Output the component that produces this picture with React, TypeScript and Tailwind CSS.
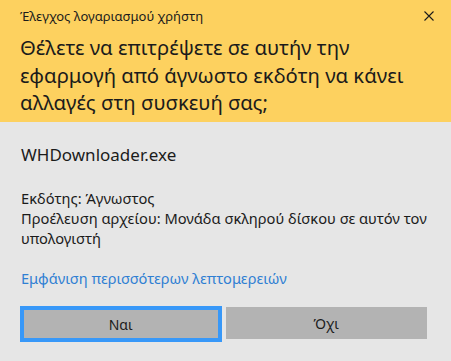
export default function App() {
  return (
    <div className="w-[451px] h-[361px] bg-[#e6e6e6] flex flex-col overflow-hidden font-['Noto_Sans','Open_Sans',sans-serif] text-[#1b1b1b]">
      {/* Header */}
      <div className="h-[122px] bg-[#fdd15f] pl-5 pr-[17px] pt-2">
        <div className="flex items-center justify-between h-4">
          <span className="text-[13px] leading-4">Έλεγχος λογαριασμού χρήστη</span>
          <svg width="10" height="10" viewBox="0 0 10 10" className="text-[#1b1b1b]">
            <path d="M0.5 0.5 L9.5 9.5 M9.5 0.5 L0.5 9.5" stroke="currentColor" strokeWidth="1.1" fill="none" />
          </svg>
        </div>
        <p className="mt-[10px] text-[20.3px] leading-[27.5px] pr-4">
          Θέλετε να επιτρέψετε σε αυτήν την εφαρμογή από άγνωστο εκδότη να κάνει αλλαγές στη συσκευή σας;
        </p>
      </div>

      {/* Body */}
      <div className="pl-5 pr-6 pt-[22px] flex flex-col">
        <div className="pl-px text-[17px] leading-[22px]">WHDownloader.exe</div>
        <div className="pl-px mt-[22px] w-[412px] text-[14.7px] leading-5">
          <div>Εκδότης: Άγνωστος</div>
          <div>Προέλευση αρχείου: Μονάδα σκληρού δίσκου σε αυτόν τον υπολογιστή</div>
        </div>
        <div className="pl-px mt-[20px] text-[14.6px] leading-5 text-[#2f7fd3]">
          Εμφάνιση περισσότερων λεπτομερειών
        </div>
        <div className="mt-[18px] grid grid-cols-2 gap-1 items-start">
          <button className="h-[36px] border-[4px] border-[#3898f8] bg-[#b3b3b3] text-[14px] text-[#1b1b1b]">
            Ναι
          </button>
          <button className="mt-px h-[32px] bg-[#b3b3b3] text-[14px] text-[#1b1b1b]">
            Όχι
          </button>
        </div>
      </div>
    </div>
  );
}
